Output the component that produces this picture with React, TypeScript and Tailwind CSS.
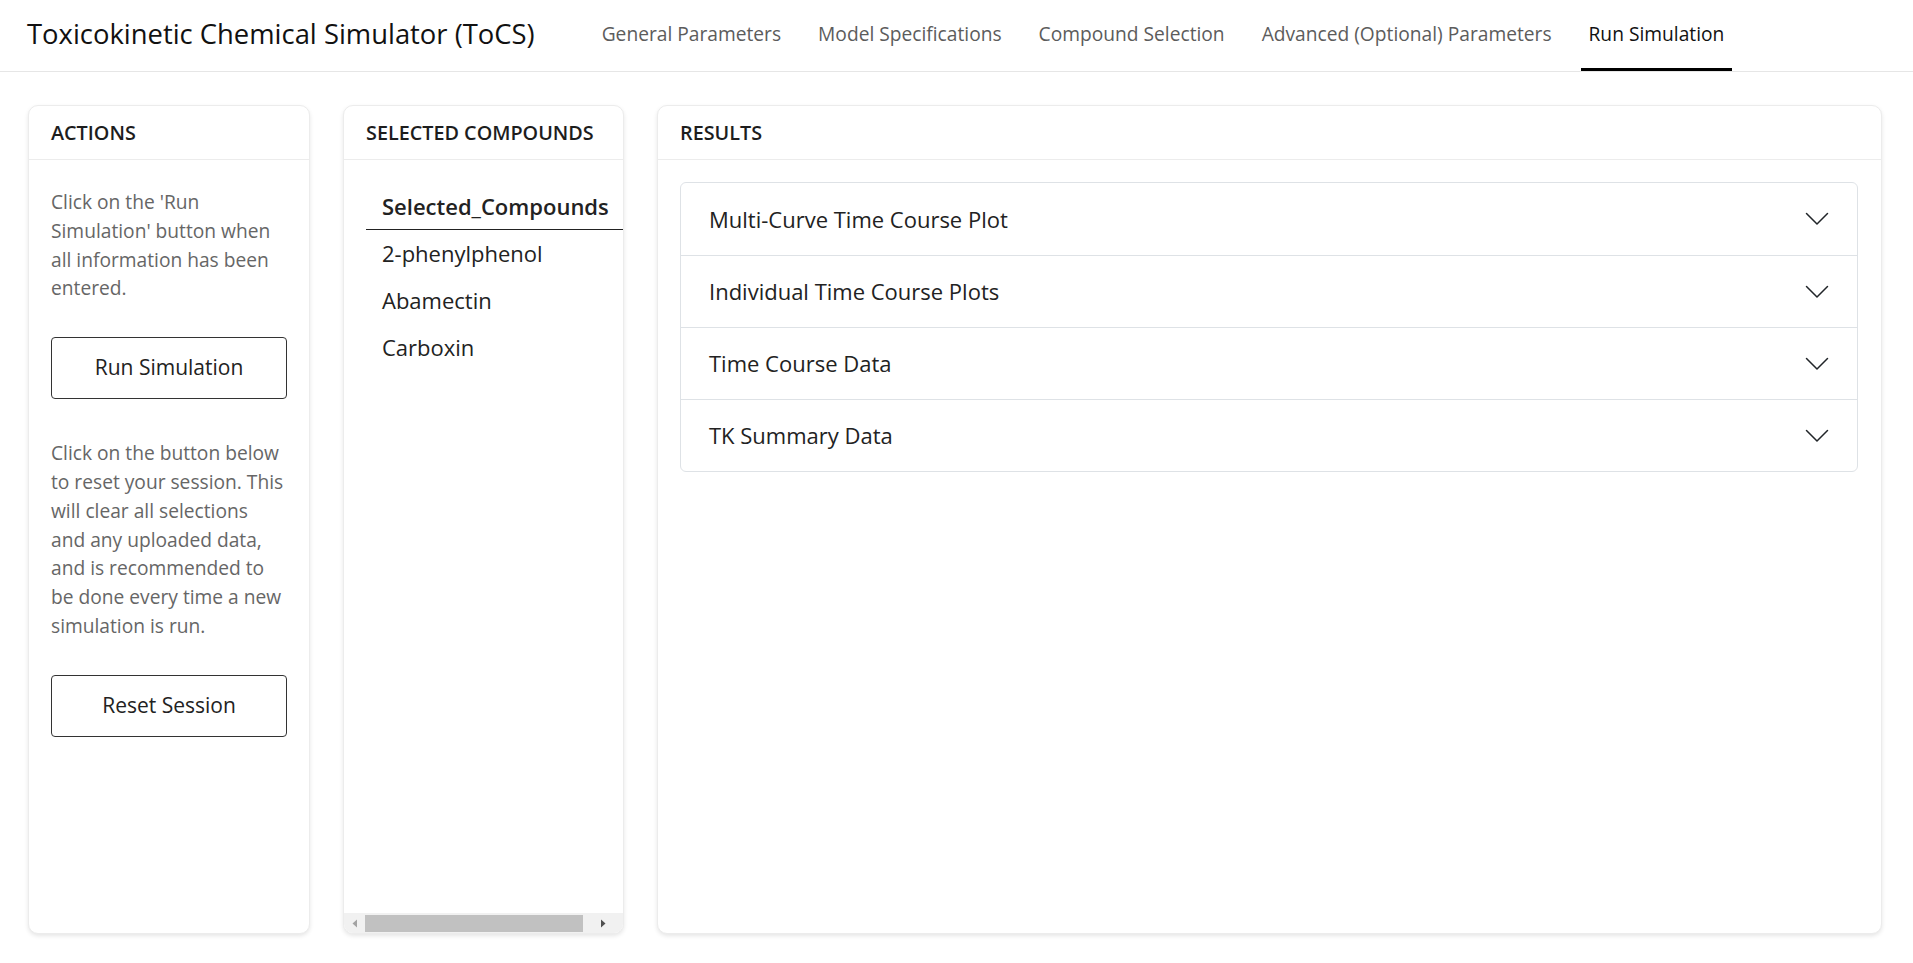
import React from 'react';

const navItems = [
  'General Parameters',
  'Model Specifications',
  'Compound Selection',
  'Advanced (Optional) Parameters',
  'Run Simulation',
];

const results = [
  'Multi-Curve Time Course Plot',
  'Individual Time Course Plots',
  'Time Course Data',
  'TK Summary Data',
];

const compounds = ['2-phenylphenol', 'Abamectin', 'Carboxin'];

const Card: React.FC<{ title: string; children: React.ReactNode }> = ({ title, children }) => (
  <div className="flex h-[829px] flex-col overflow-hidden rounded-[10px] border border-[#ececec] bg-white shadow-[0_2px_4px_rgba(0,0,0,0.1)]">
    <div className="flex h-[54px] shrink-0 items-center border-b border-[#ececec] px-[22px] text-[19.8px] font-semibold uppercase text-[#1d1d1d]">
      {title}
    </div>
    {children}
  </div>
);

const Chevron = () => (
  <svg width="24" height="14" viewBox="0 0 24 14" fill="none">
    <path d="M1.5 1.5L12 12L22.5 1.5" stroke="#212529" strokeWidth="1.5" strokeLinecap="round" strokeLinejoin="round" />
  </svg>
);

export default function App() {
  return (
    <div className="min-h-[963px] bg-white font-['Open_Sans',sans-serif]">
      {/* Navbar */}
      <header className="flex h-[72px] items-stretch border-b border-[#e6e6e6] pl-[27px]">
        <div className="flex items-center pb-[3px] text-[27.4px] text-[#111]">Toxicokinetic Chemical Simulator (ToCS)</div>
        <nav className="ml-[59px] flex items-stretch gap-[21px]">
          {navItems.map((item) => {
            const active = item === 'Run Simulation';
            return (
              <div
                key={item}
                className={
                  active
                    ? 'flex items-center border-b-[3px] border-black px-[8px] text-[19.2px] font-medium text-[#111]'
                    : 'flex items-center border-b-[3px] border-transparent px-[8px] text-[19.2px] text-[#5c5c5c]'
                }
              >
                {item}
              </div>
            );
          })}
        </nav>
      </header>

      <main className="grid grid-cols-[282px_281px_1fr] gap-[33px] pl-[28px] pr-[31px] pt-[33px]">
        {/* Actions */}
        <Card title="Actions">
          <div className="px-[22px] pt-[28px]">
            <p className="text-[19.2px] leading-[28.8px] text-[#666]">
              Click on the 'Run<br />Simulation' button when<br />all information has been<br />entered.
            </p>
            <button className="mt-[34px] h-[62px] w-full rounded-[4px] border border-[#333] text-[21px] text-[#222]">
              Run Simulation
            </button>
            <p className="mt-[40px] text-[19.2px] leading-[28.8px] text-[#666]">
              Click on the button below<br />to reset your session. This<br />will clear all selections<br />and any uploaded data,<br />and is recommended to<br />be done every time a new<br />simulation is run.
            </p>
            <button className="mt-[34px] h-[62px] w-full rounded-[4px] border border-[#333] text-[21px] text-[#222]">
              Reset Session
            </button>
          </div>
        </Card>

        {/* Selected compounds */}
        <Card title="Selected Compounds">
          <div className="flex-1 overflow-hidden pl-[22px] pt-[25px]">
            <div className="w-[320px] text-[22px] text-[#222]">
              <div className="flex h-[45px] items-center border-b-[1.5px] border-[#222] pb-[2px] pl-[16px] font-semibold">
                Selected_Compounds
              </div>
              {compounds.map((c) => (
                <div key={c} className="flex h-[47px] items-center pl-[16px]">
                  {c}
                </div>
              ))}
            </div>
          </div>
          {/* horizontal scrollbar */}
          <div className="flex h-[20px] shrink-0 items-center bg-[#f1f1f1]">
            <div className="flex w-[21px] justify-center">
              <svg width="6" height="9" viewBox="0 0 6 9"><path d="M5 0.5V8.5L0.5 4.5Z" fill="#a3a3a3" /></svg>
            </div>
            <div className="h-[17px] w-[218px] bg-[#c1c1c1]" />
            <div className="flex flex-1 justify-center">
              <svg width="6" height="9" viewBox="0 0 6 9"><path d="M1 0.5V8.5L5.5 4.5Z" fill="#505050" /></svg>
            </div>
          </div>
        </Card>

        {/* Results */}
        <Card title="Results">
          <div className="pl-[22px] pr-[23px] pt-[22px]">
            <div className="overflow-hidden rounded-[6px] border border-[#dee2e6]">
              {results.map((r, i) => (
                <div
                  key={r}
                  className={
                    i === 0
                      ? 'flex h-[72px] items-center justify-between pl-[28px] pr-[28px] text-[22px] text-[#222]'
                      : 'flex h-[72px] items-center justify-between border-t border-[#dee2e6] pl-[28px] pr-[28px] text-[22px] text-[#222]'
                  }
                >
                  <span>{r}</span>
                  <Chevron />
                </div>
              ))}
            </div>
          </div>
        </Card>
      </main>
    </div>
  );
}
